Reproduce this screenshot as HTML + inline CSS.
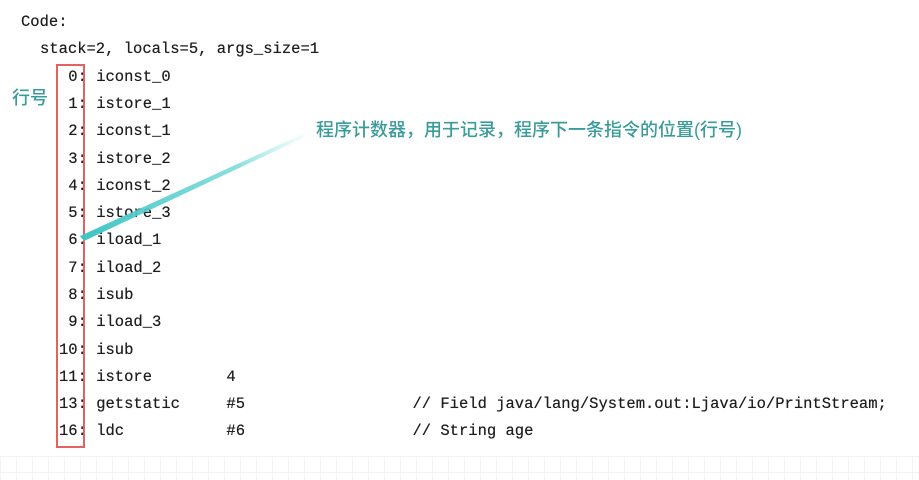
<!DOCTYPE html>
<html><head><meta charset="utf-8"><style>
html,body{margin:0;padding:0;width:919px;height:480px;overflow:hidden;background:#fff;position:relative}
.l{position:absolute;font-family:"Liberation Mono",monospace;font-size:15.5px;color:#1e1e1e;white-space:pre;line-height:18px;text-shadow:0 0 0.4px #1e1e1e}
.cn{position:absolute;font-family:"Liberation Sans","Noto Sans CJK SC",sans-serif;color:#3a9c9a;white-space:nowrap;font-weight:500}
.grid{position:absolute;left:0;top:456px;width:919px;height:24px;background-image:linear-gradient(90deg,#eee 1px,transparent 1px),linear-gradient(#eee 1px,transparent 1px);background-size:16px 16px;opacity:.7}
</style></head><body>
<div class="grid"></div>
<div class="l" style="left:21px;top:13px">Code:</div>
<div class="l" style="left:40px;top:40px">stack=2, locals=5, args_size=1</div>
<div class="l" style="left:59px;top:68px"> 0: iconst_0</div>
<div class="l" style="left:59px;top:95px"> 1: istore_1</div>
<div class="l" style="left:59px;top:122px"> 2: iconst_1</div>
<div class="l" style="left:59px;top:150px"> 3: istore_2</div>
<div class="l" style="left:59px;top:177px"> 4: iconst_2</div>
<div class="l" style="left:59px;top:204px"> 5: istore_3</div>
<div class="l" style="left:59px;top:231px"> 6: iload_1</div>
<div class="l" style="left:59px;top:259px"> 7: iload_2</div>
<div class="l" style="left:59px;top:286px"> 8: isub</div>
<div class="l" style="left:59px;top:313px"> 9: iload_3</div>
<div class="l" style="left:59px;top:341px">10: isub</div>
<div class="l" style="left:59px;top:368px">11: istore        4</div>
<div class="l" style="left:59px;top:395px">13: getstatic     #5                  // Field java/lang/System.out:Ljava/io/PrintStream;</div>
<div class="l" style="left:59px;top:422px">16: ldc           #6                  // String age</div>
<div style="position:absolute;left:56px;top:64px;width:25px;height:380px;border:2px solid #e06262"></div>
<div class="cn" style="left:12px;top:84px;font-size:18px">行号</div>
<div class="cn" style="left:316px;top:116px;font-size:18px">程序计数器，用于记录，程序下一条指令的位置(行号)</div>
<svg style="position:absolute;left:0;top:0" width="919" height="480">
<defs><linearGradient id="g" x1="82" y1="238" x2="305" y2="135" gradientUnits="userSpaceOnUse">
<stop offset="0" stop-color="#3fc4c4"/><stop offset="0.7" stop-color="#6fd6d6" stop-opacity=".8"/><stop offset="1" stop-color="#bfeeee" stop-opacity=".2"/></linearGradient></defs>
<polygon points="80,236 84,241 305,137 303,134" fill="url(#g)"/>
</svg>
</body></html>
